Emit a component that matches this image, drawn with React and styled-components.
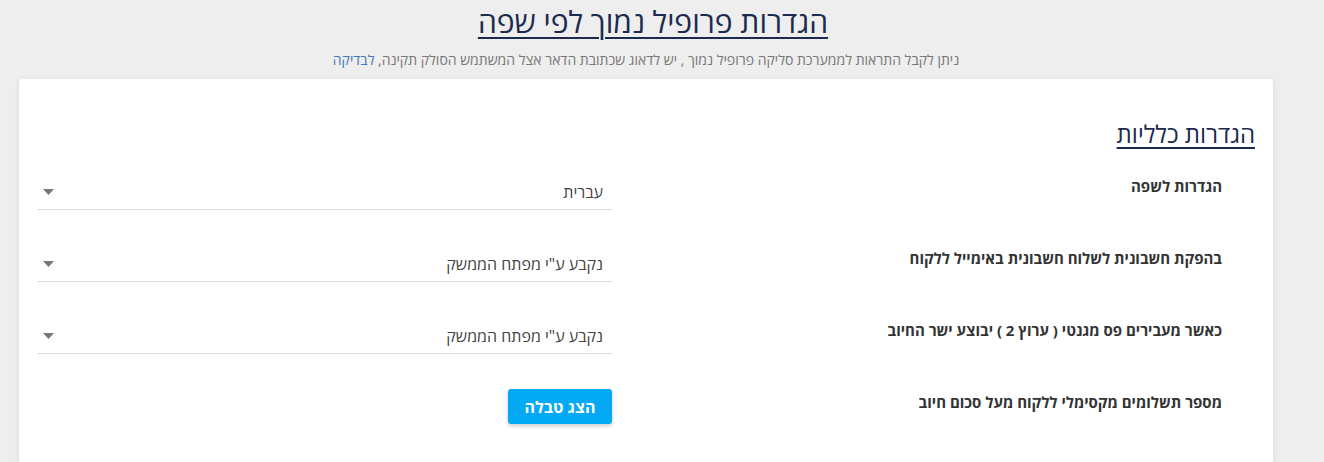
import React from 'react'
import styled, { createGlobalStyle } from 'styled-components'

const GlobalStyle = createGlobalStyle`
  html, body {
    margin: 0;
    padding: 0;
    background: #eeeeee;
  }
  body {
    font-family: "Open Sans", "Liberation Sans", "DejaVu Sans", sans-serif;
    direction: rtl;
  }
`

const Page = styled.div`
  padding-left: 19px;
  padding-right: 51px;
  direction: rtl;
`

const Header = styled.header`
  text-align: center;
  padding-top: 3px;
`

const PageTitle = styled.h1`
  margin: 0;
  padding-left: 14px;
  font-size: 30px;
  line-height: 38px;
  font-weight: 400;
  color: #1b2a4e;
  text-decoration: underline;
  text-decoration-thickness: 2px;
  text-underline-offset: 4px;
`

const Subtitle = styled.p`
  margin: 9px 0 9px;
  font-size: 14px;
  line-height: 20px;
  color: #777777;
`

const CheckLink = styled.a`
  color: #4a76b6;
  text-decoration: none;
`

const Card = styled.section`
  background: #ffffff;
  border-radius: 4px;
  box-shadow: 0 1px 6px rgba(0, 0, 0, 0.08);
  padding: 42px 18px 40px;
`

const SectionTitle = styled.h2`
  margin: 0;
  font-size: 24px;
  line-height: 26px;
  font-weight: 400;
  color: #1b2a4e;
  text-decoration: underline;
  text-decoration-thickness: 2px;
  text-underline-offset: 4px;
`

const Form = styled.div`
  display: grid;
  grid-template-columns: 1fr 575px;
  row-gap: 36px;
  margin-top: 27px;
  align-items: start;
`

const Label = styled.label`
  padding: 2px 33px 0 0;
  font-size: 15px;
  line-height: 20px;
  font-weight: 700;
  color: #333333;
`

const Select = styled.div`
  height: 35px;
  display: flex;
  align-items: center;
  justify-content: space-between;
  padding: 0 9px 0 6px;
  border-bottom: 1px solid #dddddd;
  font-size: 16px;
  color: #444444;
  cursor: pointer;
`

const Arrow = styled.svg`
  width: 11px;
  height: 6px;
  fill: #777777;
`

const ButtonCell = styled.div`
  display: flex;
`

const Button = styled.button`
  height: 35px;
  width: 104px;
  margin-top: -1px;
  border: none;
  border-radius: 3px;
  background: #03a9f4;
  color: #ffffff;
  font-family: inherit;
  font-size: 16px;
  font-weight: 700;
  box-shadow: 0 2px 4px rgba(0, 0, 0, 0.2);
  cursor: pointer;
`

const rows = [
  { label: 'הגדרות לשפה', value: 'עברית' },
  { label: 'בהפקת חשבונית לשלוח חשבונית באימייל ללקוח', value: 'נקבע ע"י מפתח הממשק' },
  { label: 'כאשר מעבירים פס מגנטי ( ערוץ 2 ) יבוצע ישר החיוב', value: 'נקבע ע"י מפתח הממשק' },
]

const App = () => {
  return (
    <Page>
      <GlobalStyle />
      <Header>
        <PageTitle>הגדרות פרופיל נמוך לפי שפה</PageTitle>
        <Subtitle>
          ניתן לקבל התראות לממערכת סליקה פרופיל נמוך , יש לדאוג שכתובת הדאר אצל המשתמש הסולק תקינה, <CheckLink href="#">לבדיקה</CheckLink>
        </Subtitle>
      </Header>
      <Card>
        <SectionTitle>הגדרות כלליות</SectionTitle>
        <Form>
          {rows.map((row) => (
            <React.Fragment key={row.label}>
              <Label>{row.label}</Label>
              <Select>
                <span>{row.value}</span>
                <Arrow viewBox="0 0 11 6">
                  <path d="M0 0 L11 0 L5.5 6 Z" />
                </Arrow>
              </Select>
            </React.Fragment>
          ))}
          <Label>מספר תשלומים מקסימלי ללקוח מעל סכום חיוב</Label>
          <ButtonCell>
            <Button>הצג טבלה</Button>
          </ButtonCell>
        </Form>
      </Card>
    </Page>
  )
}

export default App
